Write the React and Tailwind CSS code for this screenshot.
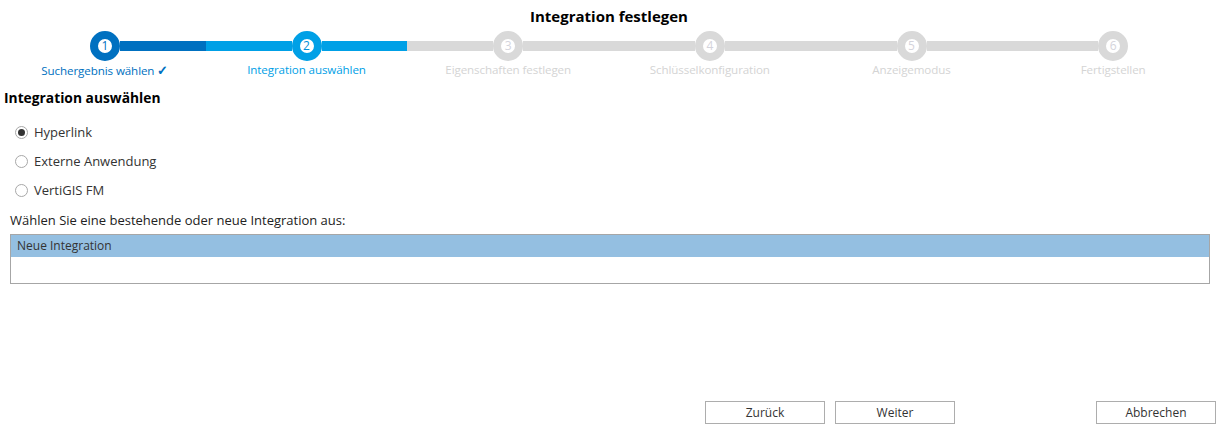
import { useState } from 'react'

const steps = [
  { label: 'Suchergebnis wählen', state: 'done' },
  { label: 'Integration auswählen', state: 'active' },
  { label: 'Eigenschaften festlegen', state: 'todo' },
  { label: 'Schlüsselkonfiguration', state: 'todo' },
  { label: 'Anzeigemodus', state: 'todo' },
  { label: 'Fertigstellen', state: 'todo' },
]

const barColor = {
  done: 'bg-[#0070c0]',
  active: 'bg-[#00a0e6]',
  todo: 'bg-[#d9d9d9]',
}

const ringColor = {
  done: 'border-[#0070c0] text-[#0070c0]',
  active: 'border-[#00a0e6] text-[#0090d8]',
  todo: 'border-[#d9d9d9] text-[#d4d4dc]',
}

const labelColor = {
  done: 'text-[#0070c0]',
  active: 'text-[#00a0e6]',
  todo: 'text-[#d4d4d4]',
}

function Stepper() {
  return (
    <div className="grid grid-cols-6 px-[4px]">
      {steps.map((s, i) => (
        <div key={i} className="flex flex-col items-center">
          <div className="flex items-center w-full h-[30px]">
            <div className={`flex-1 h-[10px] ${i === 0 ? '' : barColor[s.state]}`} />
            <div
              className={`w-[30px] h-[30px] rounded-full border-[8px] bg-white flex items-center justify-center text-[12px] leading-none ${ringColor[s.state]}`}
            >
              {i + 1}
            </div>
            <div className={`flex-1 h-[10px] ${i === steps.length - 1 ? '' : barColor[s.state]}`} />
          </div>
          <div className={`mt-[1px] h-[16px] leading-[16px] text-[11.6px] tracking-[-0.1px] ${labelColor[s.state]}`}>
            {s.label}
            {s.state === 'done' && <span className="ml-[3px] text-[13px] font-bold">✓</span>}
          </div>
        </div>
      ))}
    </div>
  )
}

function Radio({ checked, label, onClick }) {
  return (
    <div className="flex items-center h-[29px] cursor-pointer" onClick={onClick}>
      <div className="w-[13px] h-[13px] rounded-full border border-[#a8a8a8] bg-white flex items-center justify-center">
        {checked && <div className="w-[7px] h-[7px] rounded-full bg-[#333]" />}
      </div>
      <span className="ml-[6px] text-[13px] text-[#333]">{label}</span>
    </div>
  )
}

export default function App() {
  const [choice, setChoice] = useState('Hyperlink')
  const options = ['Hyperlink', 'Externe Anwendung', 'VertiGIS FM']

  return (
    <div className="h-[428px] w-full flex flex-col bg-white font-['Segoe_UI','Open_Sans',sans-serif] text-[#222]">
      <div className="h-[31px] flex items-center justify-center pt-[2px] text-[15px] font-bold text-black">
        Integration festlegen
      </div>
      <Stepper />
      <div className="mt-[10px] pl-[4px] h-[20px] leading-[20px] text-[13.8px] font-bold text-black">
        Integration auswählen
      </div>
      <div className="mt-[10px] pl-[15px] flex flex-col">
        {options.map((o) => (
          <Radio key={o} label={o} checked={choice === o} onClick={() => setChoice(o)} />
        ))}
      </div>
      <div className="mt-[6px] pl-[10px] h-[18px] leading-[18px] text-[13px] text-[#222]">
        Wählen Sie eine bestehende oder neue Integration aus:
      </div>
      <div className="mt-[5px] mx-[10px] w-[1200px] h-[50px] border border-[#a6a6a6] bg-white">
        <div className="h-[22px] bg-[#94bfe1] flex items-center pl-[6px] text-[12px] text-[#333]">Neue Integration</div>
      </div>
      <div className="flex-1" />
      <div className="flex justify-end pr-[2px] pb-[4px]">
        <button className="w-[120px] h-[23px] border border-[#adadad] bg-white text-[12px] text-[#333]">Zurück</button>
        <button className="ml-[10px] w-[120px] h-[23px] border border-[#adadad] bg-white text-[12px] text-[#333]">Weiter</button>
        <button className="ml-[141px] w-[120px] h-[23px] border border-[#adadad] bg-white text-[12px] text-[#333]">Abbrechen</button>
      </div>
    </div>
  )
}
